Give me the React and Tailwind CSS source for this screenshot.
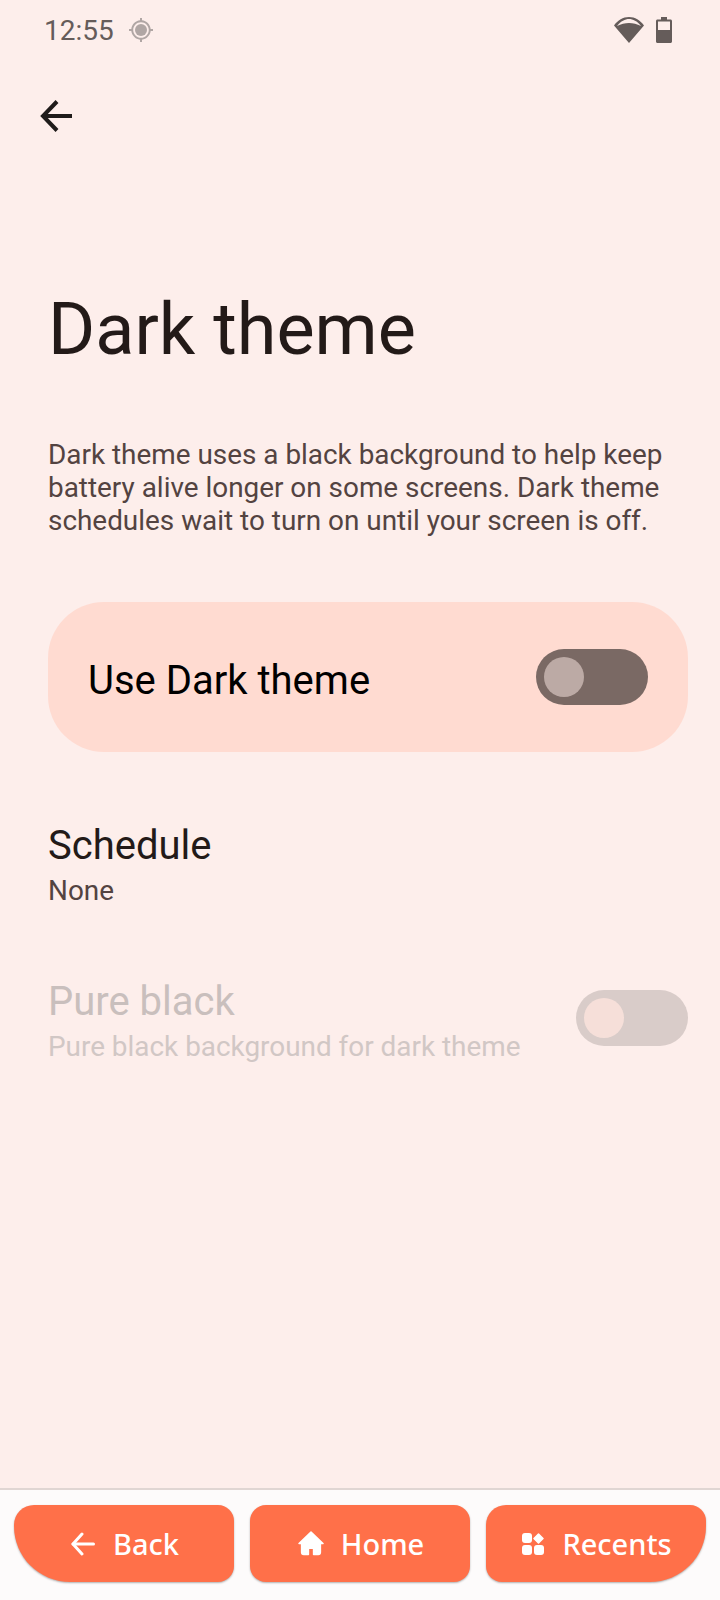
import React from "react";

function Toggle({ track, thumb, extra = "" }) {
  return (
    <div className={`w-[112px] h-[56px] rounded-full flex items-center pl-2 shrink-0 ${track} ${extra}`}>
      <div className={`w-10 h-10 rounded-full ${thumb}`} />
    </div>
  );
}

function NavButton({ icon, label, rounded, gap = "gap-[18px]" }) {
  return (
    <button className={`w-[220px] h-[77px] bg-[#ff7049] text-white flex items-center justify-center pl-[2px] shadow-[0_1px_2px_rgba(0,0,0,0.3)] ${gap} ${rounded}`}>
      {icon}
      <span className="text-[29px] leading-none font-medium font-['Noto_Sans',sans-serif]">{label}</span>
    </button>
  );
}

export default function App() {
  return (
    <div className="w-[720px] h-[1600px] bg-[#fdeeeb] flex flex-col font-['Roboto',sans-serif] overflow-hidden">
      <div className="h-[60px] pl-[44px] pr-[48px] flex items-center justify-between text-[#655c5a]">
        <div className="flex items-center gap-[15px]">
          <span className="text-[28px] leading-none pt-[2px]">12:55</span>
          <svg width="24" height="24" viewBox="0 0 24 24" className="text-[#b0a6a4]" fill="currentColor">
            <path fillRule="evenodd" d="M11 0h2v2.300c4.500.5 8.100 4.200 8.700 8.700H24v2h-2.300c-.6 4.500-4.200 8.200-8.700 8.700V24h-2v-2.300c-4.500-.5-8.100-4.200-8.700-8.700H0v-2h2.300C2.900 6.500 6.500 2.800 11 2.300V0zm1 4.200c-4.300 0-7.800 3.500-7.800 7.800s3.500 7.800 7.800 7.800 7.800-3.500 7.800-7.800-3.500-7.800-7.800-7.800z" />
            <circle cx="12" cy="12" r="6" />
          </svg>
        </div>
        <div className="flex items-center gap-[12px]">
          <svg width="30" height="26" viewBox="0 0 30 26" fill="currentColor">
            <path fillRule="evenodd" d="M15 26L0 8.500C3.800 3.200 9 0 15 0s11.200 3.200 15 8.500L15 26zM3 9C7 7 11 6 15 6s8 1 12 3C23 4 19 2 15 2S7 4 3 9z" />
          </svg>
          <svg width="16" height="26" viewBox="0 0 16 26" fill="currentColor">
            <path fillRule="evenodd" d="M5 0h6v2.500h3.500c.8 0 1.500.7 1.500 1.500v20.500c0 .8-.7 1.500-1.500 1.500h-13C.7 26 0 25.300 0 24.500V4c0-.8.7-1.500 1.500-1.500H5V0zM2 4.500V13h12V4.500H2z" />
          </svg>
        </div>
      </div>

      <div className="h-[32px] mt-[40px] pl-[40px] flex items-center">
        <svg width="32" height="32" viewBox="0 0 32 32" fill="none" stroke="#1f1b1a" strokeWidth="4" className="block">
          <path d="M32 16H4" />
          <path d="M17 1.500 L3 16 L17 30.500" />
        </svg>
      </div>

      <h1 className="pl-[48px] mt-[156px] text-[72px] leading-[84px] text-[#231a18] font-normal">Dark theme</h1>

      <p className="pl-[48px] pr-[32px] mt-[66px] text-[27.9px] leading-[33px] text-[#534341]">
        Dark theme uses a black background to help keep battery alive longer on some screens. Dark theme schedules wait to turn on until your screen is off.
      </p>

      <div className="mr-[32px] ml-[48px] mt-[65px] h-[150px] rounded-[56px] bg-[#ffdbd1] pl-[40px] pr-[40px] flex items-center justify-between">
        <span className="text-[40px] leading-none text-black pt-[8px]">Use Dark theme</span>
        <Toggle track="bg-[#7a6964]" thumb="bg-[#bcaaa5]" />
      </div>

      <div className="pl-[48px] mt-[70px]">
        <div className="text-[40px] leading-[48px] text-[#231a18]">Schedule</div>
        <div className="text-[27.9px] leading-[38px] text-[#534341] mt-[2px]">None</div>
      </div>

      <div className="pl-[48px] pr-[32px] mt-[68px] flex items-center justify-between">
        <div>
          <div className="text-[40px] leading-[48px] text-[#c9bfbd]">Pure black</div>
          <div className="text-[27.9px] leading-[38px] text-[#d1c7c5] mt-[2px]">Pure black background for dark theme</div>
        </div>
        <Toggle track="bg-[#d9ccc9]" thumb="bg-[#f6dfd9]" extra="mb-[9px]" />
      </div>

      <div className="flex-1" />

      <div className="h-[112px] bg-[#fdfbfb] border-t-2 border-[#e0d6d3] pt-[15px] px-[14px] flex gap-[16px] shrink-0">
        <NavButton
          rounded="rounded-tl-[20px] rounded-tr-[16px] rounded-br-[16px] rounded-bl-[56px]"
          label="Back"
          icon={
            <svg width="24" height="24" viewBox="0 0 24 24" fill="none" stroke="#fff" strokeWidth="3" strokeLinecap="round" strokeLinejoin="round">
              <path d="M22.500 12H2" /><path d="M11 2 L2 12 L11 22" />
            </svg>
          }
        />
        <NavButton
          rounded="rounded-[16px]"
          label="Home"
          gap="gap-[17px]"
          icon={
            <svg width="26" height="25" viewBox="0 0 25 24" fill="#fff" stroke="#fff" strokeWidth="1.500" strokeLinejoin="round">
              <path d="M12.500 1L24 12h-2.500v8.500a2 2 0 0 1-2 2H15V16.500h-5v6H5.500a2 2 0 0 1-2-2V12H1L12.500 1z" />
            </svg>
          }
        />
        <NavButton
          rounded="rounded-tl-[20px] rounded-tr-[16px] rounded-bl-[16px] rounded-br-[56px]"
          label="Recents"
          icon={
            <svg width="22" height="22" viewBox="0 0 22 22" fill="#fff">
              <rect x="0" y="0" width="10" height="10" rx="3" />
              <path d="M16.500 1L21 5.500 16.500 10 12 5.500z" stroke="#fff" strokeWidth="1.500" strokeLinejoin="round" />
              <rect x="0" y="12" width="10" height="10" rx="3" />
              <rect x="12" y="12" width="10" height="10" rx="3" />
            </svg>
          }
        />
      </div>
    </div>
  );
}
